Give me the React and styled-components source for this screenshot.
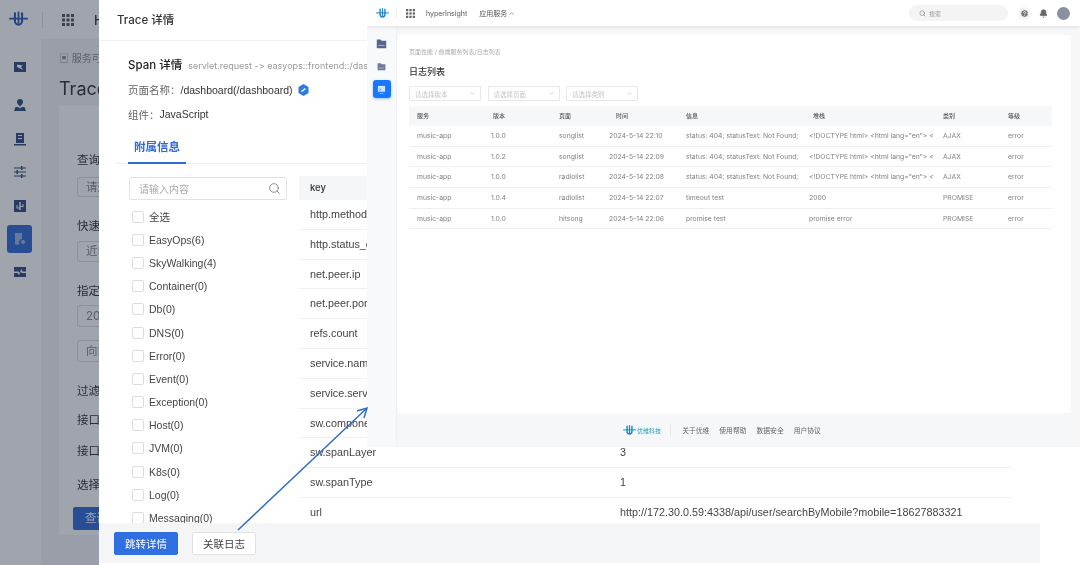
import React from 'react';
import styled, { createGlobalStyle } from 'styled-components';
import { Search, ChevronDown, ChevronUp, Bell, CircleHelp } from 'lucide-react';

const GlobalStyle = createGlobalStyle`
  html, body { margin: 0; padding: 0; background: #fff; }
  body { font-family: Inter, "Noto Sans CJK SC", sans-serif; color: #333; font-feature-settings: "calt" 0; }
  * { box-sizing: border-box; }
`;

const filters = ['全选', 'EasyOps(6)', 'SkyWalking(4)', 'Container(0)', 'Db(0)', 'DNS(0)', 'Error(0)', 'Event(0)', 'Exception(0)', 'Host(0)', 'JVM(0)', 'K8s(0)', 'Log(0)', 'Messaging(0)'];

const attrs = [
  { k: 'http.method' }, { k: 'http.status_code' }, { k: 'net.peer.ip' }, { k: 'net.peer.port' },
  { k: 'refs.count' }, { k: 'service.name' }, { k: 'service.service' }, { k: 'sw.component' },
  { k: 'sw.spanLayer', v: '3' }, { k: 'sw.spanType', v: '1' },
  { k: 'url', v: 'http://172.30.0.59:4338/api/user/searchByMobile?mobile=18627883321' },
];

const NOT_FOUND = 'status: 404; statusText: Not Found;';
const DOC = '<!DOCTYPE html> <html lang="en"> <';
const logs = [
  ['music-app', '1.0.0', 'songlist', '2024-5-14 22:10', NOT_FOUND, DOC, 'AJAX', 'error'],
  ['music-app', '1.0.2', 'songlist', '2024-5-14 22:09', NOT_FOUND, DOC, 'AJAX', 'error'],
  ['music-app', '1.0.0', 'radiolist', '2024-5-14 22:08', NOT_FOUND, DOC, 'AJAX', 'error'],
  ['music-app', '1.0.4', 'radiolist', '2024-5-14 22:07', 'timeout test', '2000', 'PROMISE', 'error'],
  ['music-app', '1.0.0', 'hitsong', '2024-5-14 22:06', 'promise test', 'promise error', 'PROMISE', 'error'],
];
const heads = [['服务', 0], ['版本', 2], ['页面', 0], ['时间', 7], ['信息', 0], ['堆栈', 4], ['类别', 0], ['等级', 0]];

const Logo = ({ size = 24, main = '#2f6bd6', cross = '#2f6bd6' }) => (
  <svg width={size} height={size} viewBox="0 0 24 24" fill="none" strokeLinecap="round">
    <path d="M1 11h22" stroke={cross} strokeWidth="2.2" />
    <path d="M7.5 4v10a4.500 4.500 0 0 0 9 0V4" stroke={main} strokeWidth="2.6" />
    <path d="M12 3v13" stroke={main} strokeWidth="2.2" />
  </svg>
);

const Dots = ({ size = 13, color = '#555' }) => (
  <svg width={size} height={size} viewBox="0 0 12 12" fill={color}>
    {[0, 4.5, 9].map((y) => [0, 4.5, 9].map((x) => <rect key={`${x}${y}`} x={x} y={y} width="3" height="3" />))}
  </svg>
);

const Folder = ({ size = 14, color = '#2c4379' }) => (
  <svg width={size} height={size} viewBox="0 0 14 14">
    <path d="M1 2h5l1 1.500h6V13H1z" fill={color} />
    <path d="M3 9.500h8" stroke="#fff" strokeOpacity=".6" />
  </svg>
);

const Monitor = () => (
  <svg width="9" height="9" viewBox="0 0 10 10">
    <path d="M1 1h8v6.500H1z" fill="#cfe2ff" />
    <path d="M3 4l1.500 1L3 6M3 9h4" stroke="#1677ff" strokeWidth=".8" fill="none" />
    <path d="M3 9.300h4" stroke="#cfe2ff" strokeWidth=".8" />
  </svg>
);

const SideGlyph = ({ kind }) => (
  <svg width="14" height="14" viewBox="0 0 14 14" fill={kind === 'search' ? '#9fb4dc' : '#2f4a80'}>
    {kind === 'card' && <path d="M1 2h12v10H1zM4 4.500l6 1-2 1.500 2 3-6-3z" fillRule="evenodd" />}
    {kind === 'user' && <path d="M7 1a3 3 0 0 1 3 3c0 2-3 4.500-3 4.500S4 6 4 4a3 3 0 0 1 3-3zM1 13l1.500-4H5l2 1.500L9 9h2.500L13 13z" />}
    {kind === 'build' && <path d="M3 1h8v10H3zM5 3v1h4V3zM5 6v1h4V6zM1 12h12v1.500H1z" fillRule="evenodd" />}
    {kind === 'slide' && <path d="M1 2.500h12v1H1zM1 6.500h12v1H1zM1 10.500h12v1H1zM8 1h1.500v4H8zM3.500 5H5v4H3.500zM8 9h1.500v4H8z" />}
    {kind === 'usb' && <path d="M1 1h12v12H1zM6.300 3v5.500H4.500V6H3.500v3.500h2.800V11h1.400V8h2.800V5h-1v2H7.700V3z" fillRule="evenodd" />}
    {kind === 'search' && <path d="M2 1h7v6a3.500 3.500 0 0 0-2.500 5.500H2zM10 8a2 2 0 1 0 .1 0zM11.500 11.500l1.500 1.500" />}
    {kind === 'pulse' && <path d="M1 2h12v4.500H9.500L8.500 4l-2 4-1-1.500H1zM1 8h3.500l1.500 2 2-3.500.8 1.500H13v4H1z" />}
  </svg>
);

const Screen = styled.div`
  position: relative;
  display: flex;
  width: 1080px;
  height: 565px;
  overflow: hidden;
  background: #fff;
  filter: blur(0.35px);
`;

/* dimmed page behind the drawer */
const BackPage = styled.div`
  position: relative;
  flex: 0 0 99px;
  display: flex;
  flex-direction: column;
  height: 565px;
  overflow: hidden;
  background: #f4f5f8;
  &::after {
    content: '';
    position: absolute;
    inset: 0;
    background: rgba(28, 38, 60, 0.42);
  }
`;

const BackHeader = styled.div`
  flex: 0 0 39px;
  display: flex;
  align-items: center;
  width: 400px;
  padding-left: 9px;
  background: #fff;
  font-size: 13px;
  font-weight: 500;
`;

const BackDivider = styled.span`
  width: 1px;
  height: 16px;
  margin: 0 19px 0 14px;
  background: #ddd;
`;

const BackBrand = styled.span`
  margin-left: 20px;
`;

const BackBody = styled.div`
  flex: 1;
  display: flex;
  width: 500px;
`;

const BackSide = styled.div`
  flex: 0 0 41px;
  display: flex;
  flex-direction: column;
  align-items: center;
  padding: 14px 2px 0 0;
  background: #fff;
`;

const BackSideItem = styled.div`
  flex: 0 0 28px;
  width: 25px;
  margin-top: ${(p) => p.$top}px;
  display: flex;
  align-items: center;
  justify-content: center;
  border-radius: 3px;
  background: ${(p) => (p.$active ? '#2f6bd6' : 'transparent')};
`;

const BackMain = styled.div`
  flex: 1;
  padding: 12px 0 0 18px;
  display: flex;
  flex-direction: column;
`;

const BackCrumb = styled.div`
  height: 14px;
  font-size: 10px;
  line-height: 14px;
  color: #888;
`;

const BackTitle = styled.div`
  margin-top: 12px;
  height: 28px;
  font-size: 18px;
  line-height: 24px;
  color: #333;
`;

const BackCard = styled.div`
  flex: 0 0 430px;
  padding: 47px 0 0 18px;
  background: #fff;
  position: relative;
`;

const BackLabel = styled.div`
  margin-top: ${(p) => p.$top}px;
  height: 16px;
  font-size: 11.500px;
  line-height: 16px;
  color: #333;
`;

const BackInput = styled.div`
  margin-top: ${(p) => p.$top}px;
  width: 200px;
  height: ${(p) => p.$h}px;
  padding-left: 8px;
  border: 1px solid #ddd;
  border-radius: 3px;
  font-size: 11.500px;
  line-height: ${(p) => p.$h - 2}px;
  color: #888;
`;

const BackButton = styled.div`
  position: absolute;
  left: 14px;
  top: 402px;
  width: 100px;
  height: 23px;
  padding-left: 12px;
  border-radius: 2px;
  background: #2f6bd6;
  color: #fff;
  font-size: 11.500px;
  line-height: 23px;
`;

const Drawer = styled.div`
  flex: 0 0 941px;
  display: flex;
  flex-direction: column;
  height: 563px;
  background: #fff;
  font-family: "Liberation Sans", "Noto Sans CJK SC", sans-serif;
`;

const DrawerHead = styled.div`
  flex: 0 0 40px;
  padding-left: 18px;
  border-bottom: 1px solid #f1f1f1;
  font-family: Inter, "Noto Sans CJK SC", sans-serif;
  font-size: 11.500px;
  font-weight: 500;
  line-height: 40px;
  color: #333;
`;

const DrawerBody = styled.div`
  flex: 1;
  min-height: 0;
  overflow: hidden;
  padding: 14px 0 0 18px;
`;

const SpanLine = styled.div`
  display: flex;
  align-items: baseline;
  height: 20px;
  padding-left: 11px;
  font-family: Inter, "Noto Sans CJK SC", sans-serif;
  line-height: 20px;
  white-space: nowrap;
  overflow: hidden;
`;

const SpanTitle = styled.span`
  font-size: 11.500px;
  font-weight: 500;
  color: #222;
`;

const SpanSub = styled.span`
  margin-left: 6px;
  font-size: 9px;
  color: #999;
`;

const InfoLine = styled.div`
  display: flex;
  align-items: center;
  height: 20px;
  margin-top: 4.500px;
  padding-left: 11px;
  font-size: 10.500px;
  color: #333;
`;

const InfoKey = styled.span`
  color: #666;
`;

const VerifyBadge = styled.svg`
  margin-left: 5px;
`;

const Tabs = styled.div`
  height: 30px;
  margin: 10px 0 0 -1px;
  border-bottom: 1px solid #eee;
`;

const Tab = styled.div`
  width: 58px;
  height: 30px;
  margin-left: 12px;
  border-bottom: 2px solid #2f6bd6;
  text-align: center;
  font-size: 11.500px;
  font-weight: 700;
  line-height: 26px;
  color: #2f6bd6;
`;

const Columns = styled.div`
  display: flex;
  margin-top: 13px;
  padding-left: 12px;
`;

const FilterCol = styled.div`
  flex: 0 0 170px;
`;

const SearchBox = styled.div`
  display: flex;
  align-items: center;
  justify-content: space-between;
  width: 158px;
  height: 23px;
  padding: 0 5px 0 9px;
  border: 1px solid #e2e2e2;
  border-radius: 2px;
  font-size: 10px;
  color: #aaa;
`;

const FilterList = styled.div`
  display: flex;
  flex-direction: column;
  margin-top: 5px;
`;

const FilterRow = styled.div`
  display: flex;
  align-items: center;
  gap: 5px;
  height: 23.200px;
  padding-left: 3px;
  font-size: 10.500px;
  color: #444;
`;

const Check = styled.span`
  width: 12px;
  height: 12px;
  border: 1px solid #dcdcdc;
  border-radius: 2px;
  background: #fff;
`;

const AttrTable = styled.div`
  width: 713px;
  margin-top: -1px;
`;

const AttrHead = styled.div`
  height: 24px;
  padding-left: 11px;
  background: #f5f6f8;
  font-family: Inter, sans-serif;
  font-size: 9.500px;
  font-weight: 500;
  line-height: 24px;
  color: #333;
`;

const AttrRow = styled.div`
  display: grid;
  grid-template-columns: 310px 1fr;
  height: 29.800px;
  padding-left: 11px;
  border-bottom: 1px solid ${(p) => (p.$last ? 'transparent' : '#f0f0f0')};
  font-size: 10.800px;
  line-height: 29.800px;
  color: #444;
  white-space: nowrap;
`;

const DrawerFoot = styled.div`
  flex: 0 0 40px;
  display: flex;
  align-items: center;
  gap: 14px;
  padding-left: 15px;
  background: #f4f5f7;
`;

const FootButton = styled.button`
  width: 64px;
  height: 23px;
  padding: 0;
  border: 1px solid ${(p) => (p.$primary ? '#2f6fe0' : '#e2e2e2')};
  border-radius: 2px;
  background: ${(p) => (p.$primary ? '#2f6fe0' : '#fff')};
  color: ${(p) => (p.$primary ? '#fff' : '#444')};
  font-family: inherit;
  font-size: 10.500px;
`;

/* pasted screenshot that floats over the drawer */
const LogWindow = styled.div`
  position: absolute;
  left: 367px;
  top: 0;
  width: 713px;
  height: 447px;
  display: flex;
  flex-direction: column;
  background: #f6f7f9;
  overflow: hidden;
`;

const WinHeader = styled.div`
  flex: 0 0 26px;
  display: flex;
  align-items: center;
  padding: 0 10px 0 9px;
  background: #fff;
  box-shadow: 0 1px 4px rgba(0, 0, 0, 0.1);
  z-index: 1;
  font-size: 7px;
  color: #555;
`;

const WinDivider = styled.span`
  width: 1px;
  height: 12px;
  margin: 0 9px 0 7px;
  background: #eee;
`;

const WinBrand = styled.span`
  margin-left: 11px;
`;

const WinService = styled.span`
  display: flex;
  align-items: center;
  gap: 1px;
  margin-left: 12px;
`;

const WinTools = styled.div`
  display: flex;
  align-items: center;
  margin-left: auto;
`;

const WinSearch = styled.div`
  display: flex;
  align-items: center;
  gap: 3px;
  width: 99px;
  height: 16px;
  padding-left: 10px;
  margin-right: 10px;
  border-radius: 8px;
  background: #f4f4f4;
  font-size: 6px;
  color: #999;
`;

const HelpWrap = styled.span`
  width: 13px;
  height: 13px;
  display: flex;
  align-items: center;
  justify-content: center;
  border-radius: 50%;
  background: #f4f4f4;
`;

const BellWrap = styled.span`
  display: flex;
  margin-left: 8px;
`;

const Avatar = styled.span`
  width: 13px;
  height: 13px;
  margin-left: 9px;
  border-radius: 50%;
  background: #8a90a0;
`;

const WinBody = styled.div`
  flex: 1;
  min-height: 0;
  display: flex;
`;

const WinSide = styled.div`
  flex: 0 0 30px;
  display: flex;
  flex-direction: column;
  align-items: center;
  gap: 5px;
  padding-top: 8px;
  background: #f8f9fb;
  border-right: 1px solid #f0f1f4;
`;

const WinSideItem = styled.div`
  width: 18px;
  height: 18px;
  display: flex;
  align-items: center;
  justify-content: center;
  border-radius: 3px;
  background: ${(p) => (p.$active ? '#1677ff' : 'transparent')};
  box-shadow: ${(p) => (p.$active ? '0 1px 3px rgba(22,119,255,.4)' : 'none')};
`;

const WinMain = styled.div`
  flex: 1;
  display: flex;
  flex-direction: column;
  padding: 9px 9px 0 0;
`;

const WinCard = styled.div`
  flex: 0 0 378px;
  padding: 12px 19px 0 12px;
  background: #fff;
  border-radius: 2px;
`;

const Crumb = styled.div`
  height: 9px;
  font-size: 6px;
  line-height: 9px;
  color: #aaa;
`;

const WinTitle = styled.div`
  margin-top: 9px;
  height: 14px;
  font-size: 9px;
  font-weight: 500;
  line-height: 14px;
  color: #333;
`;

const Selects = styled.div`
  display: flex;
  gap: 6.500px;
  margin-top: 7px;
`;

const Select = styled.div`
  display: flex;
  align-items: center;
  justify-content: space-between;
  width: 72px;
  height: 15px;
  padding: 0 4px 0 5px;
  border: 1px solid #e8e8e8;
  border-radius: 1px;
  font-size: 6.500px;
  color: #c4c4c4;
`;

const LogHead = styled.div`
  display: grid;
  grid-template-columns: 74px 68px 50px 77px 123px 134px 65px 1fr;
  height: 20px;
  margin-top: 5px;
  padding-left: 8px;
  background: #f6f7f9;
  font-size: 6px;
  font-weight: 500;
  line-height: 20px;
  color: #555;
`;

const LogHeadCell = styled.span`
  padding-left: ${(p) => p.$indent}px;
`;

const LogRow = styled.div`
  display: grid;
  grid-template-columns: 74px 68px 50px 77px 123px 134px 65px 1fr;
  height: 20.700px;
  padding-left: 8px;
  border-bottom: 1px solid #f0f0f0;
  font-size: 6.800px;
  line-height: 20.500px;
  color: #808080;
  white-space: nowrap;
`;

const LogCell = styled.span`
  overflow: hidden;
`;

const WinFoot = styled.div`
  flex: 1;
  display: flex;
  align-items: center;
  justify-content: center;
  gap: 10px;
  padding-right: 24px;
  font-size: 6.800px;
  color: #666;
`;

const FootBrand = styled.span`
  display: flex;
  align-items: center;
  gap: 1px;
  margin-right: 1px;
  padding-right: 9px;
  border-right: 1px solid #e8e8e8;
  font-size: 6px;
  color: #2a9db5;
`;

const Arrow = styled.svg`
  position: absolute;
  left: 230px;
  top: 400px;
`;

const App = () => (
  <Screen>
    <GlobalStyle />
    <BackPage>
      <BackHeader>
        <Logo size={19} main="#2f5bb5" cross="#2f5bb5" />
        <BackDivider />
        <Dots size={12} color="#555" />
        <BackBrand>Hyperinsight</BackBrand>
      </BackHeader>
      <BackBody>
        <BackSide>
          <BackSideItem $top={0}><SideGlyph kind="card" /></BackSideItem>
          <BackSideItem $top={10}><SideGlyph kind="user" /></BackSideItem>
          <BackSideItem $top={6}><SideGlyph kind="build" /></BackSideItem>
          <BackSideItem $top={5}><SideGlyph kind="slide" /></BackSideItem>
          <BackSideItem $top={6}><SideGlyph kind="usb" /></BackSideItem>
          <BackSideItem $top={5} $active><SideGlyph kind="search" /></BackSideItem>
          <BackSideItem $top={5}><SideGlyph kind="pulse" /></BackSideItem>
        </BackSide>
        <BackMain>
          <BackCrumb>▣ 服务可观测</BackCrumb>
          <BackTitle>Trace查询</BackTitle>
          <BackCard>
            <BackLabel $top={0}>查询模式</BackLabel>
            <BackInput $top={9} $h={20}>请选择</BackInput>
            <BackLabel $top={21}>快速选择</BackLabel>
            <BackInput $top={7} $h={21}>近5分钟</BackInput>
            <BackLabel $top={21}>指定开始时间</BackLabel>
            <BackInput $top={6} $h={22}>2024-05-14</BackInput>
            <BackInput $top={13} $h={22}>向前查询</BackInput>
            <BackLabel $top={21}>过滤条件</BackLabel>
            <BackLabel $top={13}>接口名称</BackLabel>
            <BackLabel $top={15}>接口状态</BackLabel>
            <BackLabel $top={18}>选择服务</BackLabel>
            <BackButton>查询</BackButton>
          </BackCard>
        </BackMain>
      </BackBody>
    </BackPage>

    <Drawer>
      <DrawerHead>Trace 详情</DrawerHead>
      <DrawerBody>
        <SpanLine>
          <SpanTitle>Span 详情</SpanTitle>
          <SpanSub>servlet.request -&gt; easyops::frontend::/dashboard</SpanSub>
        </SpanLine>
        <InfoLine>
          <InfoKey>页面名称：</InfoKey>/dashboard(/dashboard)
          <VerifyBadge width="11" height="12" viewBox="0 0 11 12">
            <path d="M5.500 0l5 3v6l-5 3-5-3V3z" fill="#2f7be0" />
            <path d="M3.500 7.500l4-3" stroke="#fff" strokeWidth="1.500" />
          </VerifyBadge>
        </InfoLine>
        <InfoLine><InfoKey>组件：</InfoKey>JavaScript</InfoLine>
        <Tabs><Tab>附属信息</Tab></Tabs>
        <Columns>
          <FilterCol>
            <SearchBox>请输入内容<Search size={13} color="#777" strokeWidth={1.500} /></SearchBox>
            <FilterList>
              {filters.map((f) => (
                <FilterRow key={f}><Check />{f}</FilterRow>
              ))}
            </FilterList>
          </FilterCol>
          <AttrTable>
            <AttrHead>key</AttrHead>
            {attrs.map((a, i) => (
              <AttrRow key={a.k} $last={i === attrs.length - 1}>
                <span>{a.k}</span>
                <span>{a.v}</span>
              </AttrRow>
            ))}
          </AttrTable>
        </Columns>
      </DrawerBody>
      <DrawerFoot>
        <FootButton $primary>跳转详情</FootButton>
        <FootButton>关联日志</FootButton>
      </DrawerFoot>
    </Drawer>

    <LogWindow>
      <WinHeader>
        <Logo size={13} main="#1f7fd0" cross="#22b8b0" />
        <WinDivider />
        <Dots size={9} color="#666" />
        <WinBrand>hyperInsight</WinBrand>
        <WinService>应用服务<ChevronUp size={7} /></WinService>
        <WinTools>
          <WinSearch><Search size={7} color="#777" />搜索</WinSearch>
          <HelpWrap><CircleHelp size={9} color="#fff" fill="#777" /></HelpWrap>
          <BellWrap><Bell size={9} color="#666" fill="#666" /></BellWrap>
          <Avatar />
        </WinTools>
      </WinHeader>
      <WinBody>
        <WinSide>
          <WinSideItem><Folder size={11} color="#58658f" /></WinSideItem>
          <WinSideItem><Folder size={9} color="#6c7a9c" /></WinSideItem>
          <WinSideItem $active><Monitor /></WinSideItem>
        </WinSide>
        <WinMain>
          <WinCard>
            <Crumb>页面性能 / 前端服务列表/日志列表</Crumb>
            <WinTitle>日志列表</WinTitle>
            <Selects>
              {['请选择版本', '请选择页面', '请选择类别'].map((s) => (
                <Select key={s}>{s}<ChevronDown size={7} color="#bbb" /></Select>
              ))}
            </Selects>
            <LogHead>
              {heads.map(([h, indent]) => <LogHeadCell key={h} $indent={indent}>{h}</LogHeadCell>)}
            </LogHead>
            {logs.map((row) => (
              <LogRow key={row[3]}>
                {row.map((c, i) => <LogCell key={i}>{c}</LogCell>)}
              </LogRow>
            ))}
          </WinCard>
          <WinFoot>
            <FootBrand><Logo size={13} main="#1f7fd0" cross="#22b8b0" />优维科技</FootBrand>
            <span>关于优维</span>
            <span>使用帮助</span>
            <span>数据安全</span>
            <span>用户协议</span>
          </WinFoot>
        </WinMain>
      </WinBody>
    </LogWindow>

    <Arrow width="140" height="135" viewBox="0 0 140 135" fill="none" stroke="#2f6cc8" strokeWidth="1.500">
      <path d="M8 130L136 9" />
      <path d="M127 11L137 8L134 18" />
    </Arrow>
  </Screen>
);

export default App;
